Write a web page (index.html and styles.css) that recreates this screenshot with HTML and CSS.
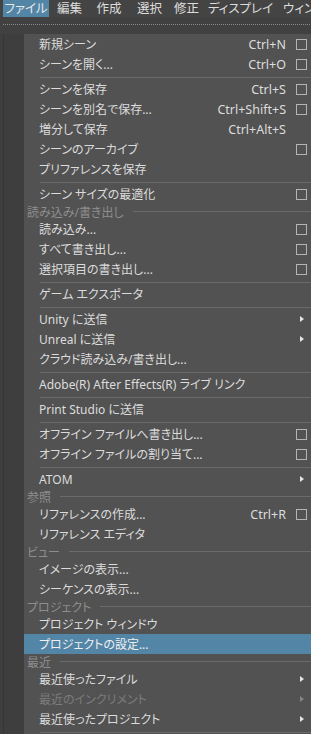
FILE: index.html
```html
<!DOCTYPE html>
<html lang="ja">
<head>
<meta charset="utf-8">
<link rel="stylesheet" href="styles.css">
</head>
<body>
<div class="menubar">
  <span class="mb mb-file active">ファイル</span>
  <span class="mb mb-edit">編集</span>
  <span class="mb mb-create">作成</span>
  <span class="mb mb-select">選択</span>
  <span class="mb mb-modify">修正</span>
  <span class="mb mb-display">ディスプレイ</span>
  <span class="mb mb-window">ウィンド</span>
</div>
<div class="tearoff"><div class="dots"></div></div>
<div class="body">
  <div class="gutter"></div>
  <div class="menu">
    <div class="item"><span class="label">新規シーン</span><span class="sc">Ctrl+N</span><span class="opt"><i class="box"></i></span></div>
    <div class="item"><span class="label">シーンを開く...</span><span class="sc">Ctrl+O</span><span class="opt"><i class="box"></i></span></div>
    <div class="sep"></div>
    <div class="item"><span class="label">シーンを保存</span><span class="sc">Ctrl+S</span><span class="opt"><i class="box"></i></span></div>
    <div class="item"><span class="label">シーンを別名で保存...</span><span class="sc">Ctrl+Shift+S</span><span class="opt"><i class="box"></i></span></div>
    <div class="item"><span class="label">増分して保存</span><span class="sc">Ctrl+Alt+S</span><span class="opt"></span></div>
    <div class="item"><span class="label">シーンのアーカイブ</span><span class="opt"><i class="box"></i></span></div>
    <div class="item"><span class="label">プリファレンスを保存</span><span class="opt"></span></div>
    <div class="sep"></div>
    <div class="item"><span class="label">シーン サイズの最適化</span><span class="opt"><i class="box"></i></span></div>
    <div class="head">読み込み/書き出し</div>
    <div class="item"><span class="label">読み込み...</span><span class="opt"><i class="box"></i></span></div>
    <div class="item"><span class="label">すべて書き出し...</span><span class="opt"><i class="box"></i></span></div>
    <div class="item"><span class="label">選択項目の書き出し...</span><span class="opt"><i class="box"></i></span></div>
    <div class="sep"></div>
    <div class="item"><span class="label">ゲーム エクスポータ</span><span class="opt"></span></div>
    <div class="sep"></div>
    <div class="item"><span class="label">Unity に送信</span><span class="opt"><i class="arrow"></i></span></div>
    <div class="item"><span class="label">Unreal に送信</span><span class="opt"><i class="arrow"></i></span></div>
    <div class="item"><span class="label">クラウド読み込み/書き出し...</span><span class="opt"></span></div>
    <div class="sep"></div>
    <div class="item"><span class="label">Adobe(R) After Effects(R) ライブ リンク</span><span class="opt"></span></div>
    <div class="sep"></div>
    <div class="item"><span class="label">Print Studio に送信</span><span class="opt"></span></div>
    <div class="sep"></div>
    <div class="item"><span class="label">オフライン ファイルへ書き出し...</span><span class="opt"><i class="box"></i></span></div>
    <div class="item"><span class="label">オフライン ファイルの割り当て...</span><span class="opt"><i class="box"></i></span></div>
    <div class="sep"></div>
    <div class="item"><span class="label">ATOM</span><span class="opt"><i class="arrow"></i></span></div>
    <div class="head">参照</div>
    <div class="item"><span class="label">リファレンスの作成...</span><span class="sc">Ctrl+R</span><span class="opt"><i class="box"></i></span></div>
    <div class="item"><span class="label">リファレンス エディタ</span><span class="opt"></span></div>
    <div class="head">ビュー</div>
    <div class="item"><span class="label">イメージの表示...</span><span class="opt"></span></div>
    <div class="item"><span class="label">シーケンスの表示...</span><span class="opt"></span></div>
    <div class="head">プロジェクト</div>
    <div class="item"><span class="label">プロジェクト ウィンドウ</span><span class="opt"></span></div>
    <div class="item hl"><span class="label">プロジェクトの設定...</span><span class="opt"></span></div>
    <div class="head">最近</div>
    <div class="item"><span class="label">最近使ったファイル</span><span class="opt"><i class="arrow"></i></span></div>
    <div class="item disabled"><span class="label">最近のインクリメント</span><span class="opt"><i class="arrow"></i></span></div>
    <div class="item"><span class="label">最近使ったプロジェクト</span><span class="opt"><i class="arrow"></i></span></div>
    <div class="sep"></div>
  </div>
</div>
</body>
</html>
```
FILE: styles.css
```css
html, body {
  margin: 0;
  padding: 0;
  width: 311px;
  height: 734px;
  overflow: hidden;
  background: #444444;
  font-family: "Noto Sans", "Noto Sans CJK JP", sans-serif;
  font-size: 12px;
  font-feature-settings: "palt";
  color: #dcdcdc;
}

.menubar {
  height: 17px;
  display: flex;
  align-items: center;
  background: #444444;
  white-space: nowrap;
  overflow: hidden;
  padding-left: 3px;
}
.mb {
  height: 17px;
  line-height: 17px;
  text-align: center;
  flex: none;
  font-size: 12.5px;
  color: #dddddd;
}
.mb.active { background: #5285a6; color: #e8e8e8; }
.mb-file { width: 46px; }
.mb-edit { width: 41px; }
.mb-create { width: 38px; }
.mb-select { width: 43px; }
.mb-modify { width: 31px; }
.mb-display { width: 77px; }
.mb-window { text-align: left; padding-left: 4px; }

.tearoff {
  height: 17px;
  background: #414141;
  padding: 7px 0 0 3px;
  box-sizing: border-box;
}
.dots {
  height: 1px;
  background-image: linear-gradient(to right, #8a8a8a 50%, transparent 50%);
  background-size: 2px 1px;
}

.body {
  display: flex;
  height: 700px;
}
.gutter {
  width: 24px;
  flex: none;
  background: #3e3e3e;
  padding-left: 3px;
  box-sizing: border-box;
}
.gutter::before {
  content: "";
  display: block;
  width: 1px;
  height: 100%;
  background: #363636;
}
.menu {
  flex: 1;
  background: #525252;
}

.item {
  height: 20px;
  display: flex;
  align-items: center;
  padding-left: 15px;
  white-space: nowrap;
}
.item.hl { background: #5285a6; color: #f0f0f0; }
.item.disabled { color: #7c7c7c; }
.label { flex: 1; }
.sc { flex: none; color: #dcdcdc; font-size: 12.5px; }
.opt {
  width: 25px;
  flex: none;
  display: flex;
  align-items: center;
  height: 20px;
}
.box {
  display: block;
  width: 11px;
  height: 11px;
  box-sizing: border-box;
  border: 1px solid #b4b4b4;
  margin-left: 10px;
}
.arrow {
  display: block;
  width: 0;
  height: 0;
  border-top: 3.5px solid transparent;
  border-bottom: 3.5px solid transparent;
  border-left: 4px solid #e6e6e6;
  margin-left: 14px;
}
.disabled .arrow { border-left-color: #858585; }

.sep {
  height: 5px;
  padding: 3px 0 0 16px;
  box-sizing: border-box;
}
.sep::after {
  content: "";
  display: block;
  height: 1px;
  background: #6a6a6a;
}

.head {
  height: 15px;
  display: flex;
  align-items: center;
  padding-left: 3px;
  color: #8e8e8e;
  white-space: nowrap;
}
.head::after {
  content: "";
  flex: 1;
  height: 1px;
  background: #6a6a6a;
  margin-left: 9px;
}
```
